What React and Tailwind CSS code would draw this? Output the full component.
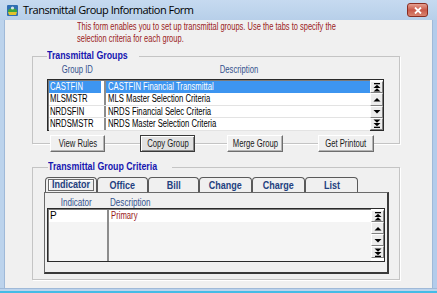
import React from 'react';

const sans = "font-['Liberation_Sans',Arial,sans-serif]";

const groups = [
  { id: 'CASTFIN', desc: 'CASTFIN Financial Transmittal' },
  { id: 'MLSMSTR', desc: 'MLS Master Selection Criteria' },
  { id: 'NRDSFIN', desc: 'NRDS Financial Selec Criteria' },
  { id: 'NRDSMSTR', desc: 'NRDS Master Selection Criteria' },
];

const tabs = [
  { label: 'Indicator', w: 'w-[52px]' },
  { label: 'Office', w: 'w-[51px]' },
  { label: 'Bill', w: 'w-[51px]' },
  { label: 'Change', w: 'w-[53px]' },
  { label: 'Charge', w: 'w-[53px]' },
  { label: 'List', w: 'w-[53px]' },
];

// narrow text: the original uses a condensed system font
const T = ({ children, center, sx = 'scale-x-[0.77]', className = '' }) => (
  <span
    className={`inline-block whitespace-nowrap ${sx} ${center ? 'origin-center' : 'origin-left'} ${className}`}
  >
    {children}
  </span>
);

const Glyph = ({ kind }) => (
  <svg width="8" height="9" viewBox="0 0 8 9" className="fill-black">
    {kind === 'first' && (
      <>
        <rect x="1" y="0" width="6" height="1.3" />
        <polygon points="0.5,5 4,1.8 7.5,5" />
        <polygon points="0.5,8.5 4,5.3 7.5,8.5" />
      </>
    )}
    {kind === 'up' && <polygon points="0.5,6.5 4,3 7.5,6.5" />}
    {kind === 'down' && <polygon points="0.5,3 4,6.5 7.5,3" />}
    {kind === 'last' && (
      <>
        <polygon points="0.5,0.5 4,3.7 7.5,0.5" />
        <polygon points="0.5,4 4,7.2 7.5,4" />
        <rect x="1" y="7.7" width="6" height="1.3" />
      </>
    )}
  </svg>
);

const ScrollButtons = ({ h }) => (
  <div className="flex w-[13px] flex-col bg-white pt-[1px]">
    {['first', 'up', 'down', 'last'].map((k) => (
      <div
        key={k}
        className={`${h} flex items-center justify-center border border-t-white border-l-white border-b-[#808080] border-r-[#808080] bg-[#ececec]`}
      >
        <Glyph kind={k} />
      </div>
    ))}
  </div>
);

const Button = ({ children, primary, className }) => (
  <div
    className={`${className} flex h-[17px] items-center justify-center text-[10px] text-[#1a1a1a] ${
      primary
        ? 'border border-[#3a3a3a] bg-[#e2e2e2] shadow-[inset_1px_1px_0_#fff,inset_-1px_-1px_0_#8a8a8a]'
        : 'border border-t-white border-l-white border-b-[#6e6e6e] border-r-[#6e6e6e] bg-[#f0f0f0] shadow-[inset_-1px_-1px_0_#b4b4b4]'
    }`}
  >
    <T center>{children}</T>
  </div>
);

export default function App() {
  return (
    <div className={`${sans} flex h-[293px] w-[437px] flex-col overflow-hidden bg-[#b9d1ea]`}>
      {/* Title bar */}
      <div className="flex h-[20px] items-center bg-gradient-to-b from-[#c6daf0] to-[#b7cfe9] pl-[7px] pr-[9px]">
        <svg width="11" height="11" viewBox="0 0 11 11">
          <rect x="0" y="0" width="11" height="11" rx="1" fill="#2f6fb3" />
          <path d="M1 5 Q5.5 1 10 5 L10 7 L1 7 Z" fill="#3aa640" />
          <path d="M1 7 L10 7 L9 10 L2 10 Z" fill="#e2c22c" />
          <circle cx="5.5" cy="3" r="1.6" fill="#ffffff" opacity="0.8" />
        </svg>
        <span className="ml-[5px] flex-1 font-['Open_Sans',sans-serif] text-[11px] tracking-[-0.5px] text-black">
          Transmittal Group Information Form
        </span>
        <div className="flex h-[14px] w-[21px] items-center justify-center rounded-[3px] border border-[#8a2d22] bg-gradient-to-b from-[#e5a092] via-[#c8594a] to-[#d98470]">
          <svg width="8" height="7" viewBox="0 0 8 7">
            <path d="M1 0.5 L7 6.5 M7 0.5 L1 6.5" stroke="#fff" strokeWidth="1.8" />
          </svg>
        </div>
      </div>

      <div className="flex flex-1">
        <div className="w-[5px] border-r border-[#9fb9d8] bg-[#bcd3ec]" />
        {/* Client */}
        <div className="flex-1 bg-[#f0f0f0]">
          <div className="flex flex-col pl-[72px] pt-[1px] text-[10px] leading-[12px] text-[#9b1c1c]">
            <T sx="scale-x-[0.75]">This form enables you to set up transmittal groups. Use the tabs to specify the</T>
            <T sx="scale-x-[0.75]">selection criteria for each group.</T>
          </div>

          {/* Transmittal Groups */}
          <fieldset className="ml-[27px] mt-[5px] w-[368px] border border-[#c4c4c4] px-[14px] pb-0 shadow-[1px_1px_0_#fff]">
            <legend className="px-0 text-[10px] font-bold leading-[12px] text-[#1616b0]">
              <T sx="scale-x-[0.88]">Transmittal Groups</T>
            </legend>
            <div className="mt-[1px] flex h-[13px] text-[10px] leading-[13px] text-[#34528e]">
              <div className="w-[61px] text-center"><T center>Group ID</T></div>
              <div className="w-[262px] text-center"><T center>Description</T></div>
            </div>
            <div className="mt-[3px] flex h-[52px] w-[337px] border border-[#2a2a2a] bg-white shadow-[inset_1px_1px_0_#7a7a7a]">
              <div className="flex flex-1 flex-col pl-[1px] pt-[1px]">
                {groups.map((g, i) => (
                  <div
                    key={g.id}
                    className={`flex h-[12.5px] text-[10px] leading-[12px] ${
                      i === 0 ? 'text-white' : 'border-b border-[#e3e3e3] text-black'
                    }`}
                  >
                    <div className="w-[57px] overflow-hidden border-r-2 border-[#8c8c8c] pr-[3px]">
                      <div className={`pl-[1px] ${i === 0 ? 'bg-[#3d95f0]' : ''}`}><T>{g.id}</T></div>
                    </div>
                    <div className={`flex-1 pl-[2px] ${i === 0 ? 'bg-[#3d95f0]' : ''}`}><T>{g.desc}</T></div>
                  </div>
                ))}
              </div>
              <ScrollButtons h="h-[12.5px]" />
            </div>
            <div className="-mb-[9px] mt-[4px] flex">
              <Button className="ml-[3px] w-[55px]">View Rules</Button>
              <Button primary className="ml-[35px] w-[55px]">Copy Group</Button>
              <Button className="ml-[32px] w-[56px]">Merge Group</Button>
              <Button className="ml-[35px] w-[56px]">Get Printout</Button>
            </div>
          </fieldset>

          {/* Transmittal Group Criteria */}
          <fieldset className="ml-[27px] mt-[17px] w-[368px] border border-[#c4c4c4] pb-[5px] pl-[11px] pt-[4px] shadow-[1px_1px_0_#fff]">
            <legend className="ml-[4px] px-0 text-[10px] font-bold leading-[12px] text-[#1616b0]">
              <T sx="scale-x-[0.88]">Transmittal Group Criteria</T>
            </legend>
            <div className="ml-[1px] flex h-[15px] items-end">
              {tabs.map((t, i) => (
                <div
                  key={t.label}
                  className={`${t.w} flex h-[15px] items-center justify-center rounded-t-[4px] border border-b-0 border-[#5a5a5a] bg-[#f0f0f0] text-[10px] font-bold text-[#23407f]`}
                >
                  {i === 0 ? (
                    <span className="border border-[#6a6a6a] px-[1px] leading-[10px] shadow-[inset_1px_1px_0_#fff]">
                      <T center sx="scale-x-[0.9]">{t.label}</T>
                    </span>
                  ) : (
                    <T center sx="scale-x-[0.9]">{t.label}</T>
                  )}
                </div>
              ))}
            </div>
            <div className="w-[345px] border border-l-[#6a6a6a] border-t-[#6a6a6a] border-r-2 border-b-2 border-r-[#3a3a3a] border-b-[#3a3a3a] pb-[10px] pt-[4px]">
              <div className="flex h-[11px] text-[10px] leading-[11px] text-[#34528e]">
                <div className="w-[63px] text-center"><T center sx="scale-x-[0.81]">Indicator</T></div>
                <div className="pl-[2px]"><T sx="scale-x-[0.81]">Description</T></div>
              </div>
              <div className="ml-[2px] flex h-[54px] w-[338px] border border-[#2a2a2a] bg-[#f4f4f4] shadow-[inset_1px_1px_0_#7a7a7a]">
                <div className="flex flex-1 pl-[1px] pt-[1px]">
                  <div className="w-[60px] border-r-2 border-[#8c8c8c]">
                    <div className="h-[12px] bg-white pl-[1px] text-[10px] leading-[12px] text-black">P</div>
                  </div>
                  <div className="flex-1">
                    <div className="h-[12px] bg-white pl-[2px] text-[10px] leading-[12px] text-[#9a1a1a]"><T>Primary</T></div>
                  </div>
                </div>
                <ScrollButtons h="h-[12px]" />
              </div>
            </div>
          </fieldset>
        </div>
        <div className="w-[5px] border-l border-[#9fb9d8] bg-[#b3cceb]" />
      </div>
      <div className="h-[5px] border-t border-[#9fb9d8] bg-[#bcd3ec]">
        <div className="mt-[2px] h-[2px] bg-[#45bbe6]" />
      </div>
    </div>
  );
}
